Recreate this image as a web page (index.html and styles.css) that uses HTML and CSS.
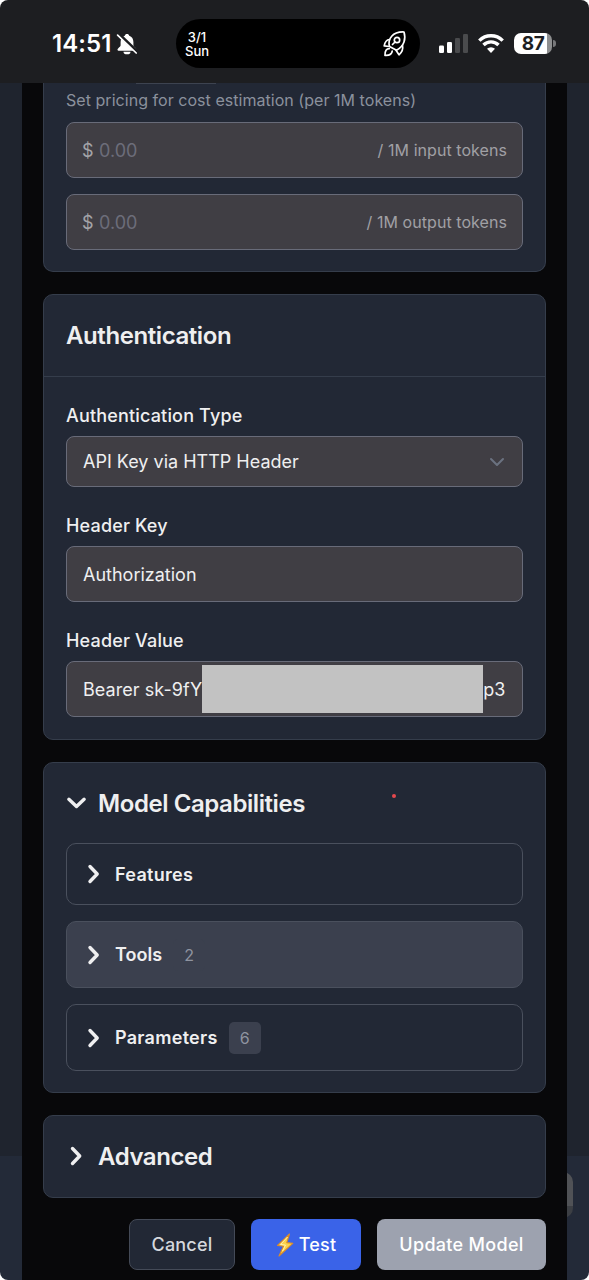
FILE: index.html
```html
<!DOCTYPE html>
<html lang="en">
<head>
    <meta charset="UTF-8">
    <meta name="viewport" content="width=device-width, initial-scale=1.0">
    <title>Edit Model</title>
    <link rel="stylesheet" href="styles.css">
</head>
<body>
    <div class="phone">
        <header class="status-bar">
            <div class="clock">
                <span class="time">14:51</span>
                <svg class="bell" width="22" height="22" viewBox="0 0 22 22">
                    <path d="M11 1c-1.200 0-2 .7-2.200 1.700C6 3.600 4.600 6 4.600 9v3.500c0 1.200-3.200 2.900-3.200 4.300 0 .5.400.9 1 .9h17.200c.6 0 1-.4 1-.9 0-1.400-3.200-3.100-3.200-4.300V9c0-3-1.400-5.400-4.200-6.300C13 1.700 12.200 1 11 1z" fill="#fff"/>
                    <path d="M7.500 18.700h7a3.500 2.600 0 0 1-7 0z" fill="#fff"/>
                    <path d="M2.800 1.200l18 17.200" stroke="#1d1e21" stroke-width="3.400"/>
                    <path d="M1.600 2.200l18.600 17.800" stroke="#fff" stroke-width="1.700" stroke-linecap="round"/>
                </svg>
            </div>
            <div class="island">
                <div class="date">3/1<br>Sun</div>
                <svg class="rocket" width="24" height="28" viewBox="0 0 24 28" fill="none" stroke="#fff" stroke-width="1.700" stroke-linecap="round" stroke-linejoin="round">
                    <path d="M6.500 16.500C4.500 9 9.500 1.500 21 2c2 6.500.5 14-7.500 18.300z"/>
                    <circle cx="14" cy="10" r="2.700"/>
                    <path d="M12 12l-2.500 2.500"/>
                    <path d="M6.500 9.500c-3 .3-4.600 2.700-5.300 6.300l4.800.7"/>
                    <path d="M19.500 15.500c.8 3.500-.8 7-3.500 9.300l-3-4.500"/>
                    <path d="M6.300 18.600c-2.800.1-4.500 2.200-4.300 6.800 4.400.3 6.900-1.300 7.200-4.200"/>
                </svg>
            </div>
            <div class="indicators">
                <svg class="signal" width="29" height="19" viewBox="0 0 29 19" fill="#fff">
                    <rect x="0" y="11.500" width="5" height="7.500" rx="1.300"/>
                    <rect x="8" y="8" width="5" height="11" rx="1.300"/>
                    <rect x="16" y="4" width="5" height="15" rx="1.300" fill="#4a4b4d"/>
                    <rect x="24" y="0" width="5" height="19" rx="1.300" fill="#4a4b4d"/>
                </svg>
                <svg class="wifi" width="26" height="19" viewBox="0 0 26 19" fill="none" stroke="#fff" stroke-width="3.400">
                    <path d="M1.300 6.600a16.500 16.500 0 0 1 23.400 0"/>
                    <path d="M5.500 11a10.500 10.500 0 0 1 15 0"/>
                    <path d="M13 19l-4-4.200a5.800 5.800 0 0 1 8 0z" fill="#fff" stroke="none"/>
                </svg>
                <div class="battery"><span>87</span></div>
            </div>
        </header>

        <main class="backdrop">
            <div class="fab"></div>
            <form class="modal">
                <section class="card pricing">
                    <div class="scrolled-field"></div>
                    <p class="hint">Set pricing for cost estimation (per 1M tokens)</p>
                    <div class="field price">
                        <span class="currency">$</span>
                        <input type="text" placeholder="0.00">
                        <span class="unit">/ 1M input tokens</span>
                    </div>
                    <div class="field price">
                        <span class="currency">$</span>
                        <input type="text" placeholder="0.00">
                        <span class="unit">/ 1M output tokens</span>
                    </div>
                </section>

                <section class="card auth">
                    <h2 class="card-title">Authentication</h2>
                    <div class="card-body">
                        <label>Authentication Type</label>
                        <div class="field select">
                            <span>API Key via HTTP Header</span>
                            <svg width="16" height="10" viewBox="0 0 16 10" fill="none" stroke="#6b7280" stroke-width="2" stroke-linecap="round" stroke-linejoin="round">
                                <path d="M2 2l6 6 6-6"/>
                            </svg>
                        </div>
                        <label>Header Key</label>
                        <div class="field"><span>Authorization</span></div>
                        <label>Header Value</label>
                        <div class="field secret">
                            <span>Bearer sk-9fY</span>
                            <span class="redacted"></span>
                            <span>p3</span>
                        </div>
                    </div>
                </section>

                <section class="card capabilities">
                    <span class="dot"></span>
                    <h2 class="toggle">
                        <svg width="20" height="20" viewBox="0 0 20 20"><path d="M2.900 6.300l7.600 7.200 7.600-7.200"/></svg>
                        <span>Model Capabilities</span>
                    </h2>
                    <div class="item features">
                        <svg width="20" height="20" viewBox="0 0 20 20"><path d="M6 2.500l7.200 7.500L6 17.500"/></svg>
                        <span class="name">Features</span>
                    </div>
                    <div class="item active">
                        <svg width="20" height="20" viewBox="0 0 20 20"><path d="M6 2.500l7.200 7.500L6 17.500"/></svg>
                        <span class="name">Tools</span>
                        <span class="count">2</span>
                    </div>
                    <div class="item">
                        <svg width="20" height="20" viewBox="0 0 20 20"><path d="M6 2.500l7.200 7.500L6 17.500"/></svg>
                        <span class="name">Parameters</span>
                        <span class="count">6</span>
                    </div>
                </section>

                <section class="card advanced">
                    <h2 class="toggle">
                        <svg width="20" height="20" viewBox="0 0 20 20"><path d="M6.500 2.500l7.200 7.500-7.200 7.500"/></svg>
                        <span>Advanced</span>
                    </h2>
                </section>

                <footer class="actions">
                    <button type="button" class="btn cancel">Cancel</button>
                    <button type="button" class="btn test">
                        <svg width="18" height="24" viewBox="0 0 18 24">
                            <path d="M13.500 1L1.500 12.500l6 .8L3 23 16.800 10.300l-6-.7z" fill="#fbd34d" stroke="#d98b2b" stroke-width="1.100" stroke-linejoin="round"/>
                            <path d="M11.500 4L4.500 11.400l5 .7-3 6" fill="none" stroke="#fff3b0" stroke-width="1"/>
                        </svg>
                        <span>Test</span>
                    </button>
                    <button type="button" class="btn update">Update Model</button>
                </footer>
            </form>
        </main>
    </div>
</body>
</html>
```

FILE: styles.css
```css
* {
    box-sizing: border-box;
}

body {
    margin: 0;
    background-color: #fff;
    font-family: Inter, "Liberation Sans", sans-serif;
    color: #efeff0;
}

.phone {
    width: 589px;
    height: 1280px;
    border-radius: 8px;
    overflow: hidden;
    display: flex;
    flex-direction: column;
}

/* Status bar */
.status-bar {
    height: 83px;
    flex-shrink: 0;
    background-color: #1d1e21;
    display: flex;
    align-items: center;
    padding: 4px 35px 0 52px;
    color: #fff;
}

.clock {
    display: flex;
    align-items: center;
    gap: 4px;
    width: 124px;
}

.time {
    font-size: 24px;
    font-weight: 600;
    letter-spacing: 0.1px;
}

.island {
    width: 244px;
    height: 49px;
    border-radius: 25px;
    background-color: #000;
    display: flex;
    align-items: center;
    justify-content: space-between;
    padding: 0 13px 0 9px;
}

.date {
    font-size: 13px;
    line-height: 14px;
    font-weight: 500;
    text-align: center;
}

.indicators {
    margin-left: 19px;
    display: flex;
    align-items: center;
    gap: 10px;
}

.battery {
    position: relative;
    width: 38px;
    height: 21px;
    border-radius: 7px;
    background: linear-gradient(to right, #fff 33px, #8e8f90 33px);
    color: #1d1e21;
    font-size: 19px;
    font-weight: 700;
    letter-spacing: -0.5px;
    line-height: 21px;
    text-align: center;
}

.battery::after {
    content: "";
    position: absolute;
    right: -4px;
    top: 7px;
    width: 3px;
    height: 7px;
    border-radius: 0 3px 3px 0;
    background-color: #77787a;
}

/* Page behind the modal */
.backdrop {
    position: relative;
    flex: 1;
    padding: 0 22px;
    background: linear-gradient(to bottom, #1f242e 1073px, #232a38 1073px);
}

.fab {
    position: absolute;
    right: 16px;
    top: 1089px;
    width: 46px;
    height: 46px;
    border-radius: 10px;
    background: linear-gradient(to bottom, #505256 34px, #3c3f44 34px);
}

.modal {
    position: relative;
    height: 100%;
    background-color: #08080a;
    padding: 0 21px;
}

.card {
    position: relative;
    background-color: #222835;
    border: 1px solid #353d4b;
    border-radius: 10px;
    padding: 0 22px;
    margin-bottom: 22px;
}

.pricing {
    height: 189px;
    border-top: none;
    border-radius: 0 0 10px 10px;
    padding-top: 5px;
}

.scrolled-field {
    position: absolute;
    left: 92px;
    top: 0;
    width: 80px;
    height: 1px;
    background-color: #3d4350;
}

.hint {
    margin: 0 0 10px;
    font-size: 16px;
    line-height: 24px;
    letter-spacing: 0.04px;
    color: #8b919d;
}

.field {
    height: 56px;
    border: 1px solid #686b79;
    border-radius: 8px;
    background-color: #403e44;
    display: flex;
    align-items: center;
    padding: 0 17px 0 16px;
    font-size: 18px;
}

.price {
    margin-bottom: 16px;
    padding: 0 15px;
}

.currency {
    color: #a4a4a8;
    width: 17px;
}

.price input {
    flex: 1;
    min-width: 0;
    border: none;
    padding: 0;
    background: none;
    outline: none;
    color: #efeff0;
    font-family: inherit;
    font-size: 18px;
}

.price input::placeholder {
    color: #6c6d7a;
}

.unit {
    font-size: 16px;
    letter-spacing: 0.06px;
    color: #a0a0a5;
}

/* Authentication */
.auth {
    height: 446px;
    padding: 0;
}

.card-title {
    margin: 0;
    height: 82px;
    padding: 0 22px;
    border-bottom: 1px solid #353d4b;
    font-size: 24px;
    line-height: 82px;
    font-weight: 600;
    letter-spacing: -0.42px;
}

.card-body {
    padding: 23px 22px 0;
}

.card-body label {
    display: block;
    font-size: 18px;
    line-height: 31px;
    height: 36px;
    font-weight: 500;
    letter-spacing: 0.17px;
}

.card-body .field {
    margin-bottom: 23px;
}

.card-body .select {
    height: 51px;
    justify-content: space-between;
}

.secret {
    white-space: nowrap;
    letter-spacing: 0.06px;
}

.redacted {
    width: 281px;
    height: 48px;
    background-color: #c2c2c2;
    flex-shrink: 0;
}

/* Capabilities */
.capabilities {
    height: 331px;
}

.toggle {
    margin: 0;
    height: 80px;
    display: flex;
    align-items: center;
    gap: 12px;
    font-size: 24px;
    font-weight: 600;
    letter-spacing: -0.43px;
}

.toggle svg,
.item svg {
    flex-shrink: 0;
    fill: none;
    stroke: #efeff0;
    stroke-width: 3.4;
    stroke-linecap: round;
    stroke-linejoin: round;
}

.dot {
    position: absolute;
    left: 348px;
    top: 31px;
    width: 4px;
    height: 4px;
    border-radius: 50%;
    background-color: #e5484d;
}

.item {
    height: 67px;
    border: 1px solid #4a505d;
    border-radius: 10px;
    margin-bottom: 16px;
    padding: 0 17px;
    display: flex;
    align-items: center;
    font-size: 18px;
    font-weight: 600;
}

.item .name {
    margin-left: 11px;
    letter-spacing: 0.28px;
}

.features {
    height: 62px;
}

.active {
    background-color: #3b404e;
}

.active .name {
    letter-spacing: 0.05px;
}

.count {
    width: 32px;
    height: 32px;
    margin-left: 11px;
    border-radius: 5px;
    background-color: #3b404e;
    color: #8f94a0;
    font-size: 16px;
    font-weight: 400;
    line-height: 32px;
    text-align: center;
}

/* Advanced + footer */
.advanced {
    height: 83px;
    margin-bottom: 21px;
}

.actions {
    display: flex;
    justify-content: flex-end;
    gap: 16px;
}

.btn {
    height: 51px;
    padding: 0;
    border: 1px solid transparent;
    border-radius: 8px;
    font-family: inherit;
    font-size: 18px;
    font-weight: 500;
    letter-spacing: 0.2px;
    color: #fff;
}

.cancel {
    width: 106px;
    background-color: #222835;
    border-color: #444a57;
    color: #d5d8de;
}

.test {
    width: 110px;
    background-color: #3a63e8;
    display: flex;
    align-items: center;
    justify-content: center;
    gap: 5px;
}

.update {
    width: 169px;
    background-color: #9da2af;
    letter-spacing: 0.3px;
}
```
